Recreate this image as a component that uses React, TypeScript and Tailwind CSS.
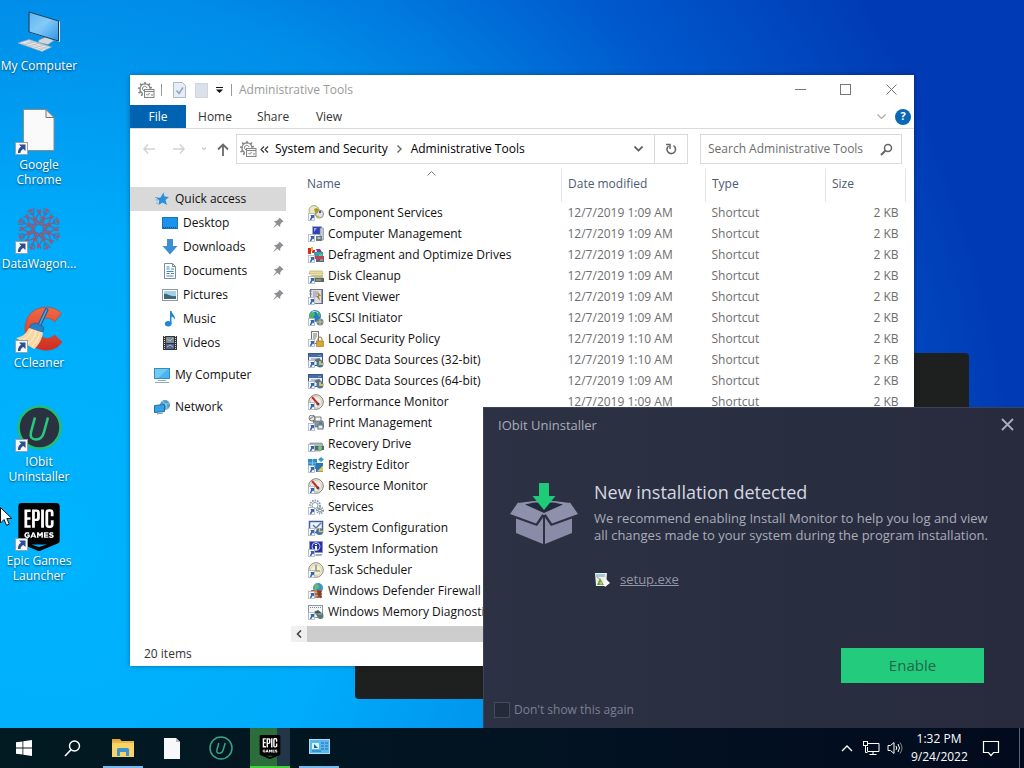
import React from "react";
import { SiEpicgames } from "react-icons/si";

const BLUE = "#2a8fd8";

function ShortcutBadge() {
  return (
    <svg viewBox="0 0 13 13" className="absolute bottom-0 left-[15px] size-[13px]" aria-hidden="true">
      <rect x=".5" y=".5" width="12" height="12" fill="#f7f9fc" stroke="#8fa3b5" />
      <path d="M4 2.500h6.500V9L8.300 7C6.500 8 5.600 9.200 5.400 11H3C2.800 8 4 6 6.100 4.700Z" fill="#2c4f93" />
    </svg>
  );
}

function MonitorLarge() {
  return (
    <svg viewBox="0 0 48 48" className="size-12" aria-hidden="true">
      <defs>
        <linearGradient id="scr" x1="0" y1="0" x2="1" y2="1">
          <stop offset="0" stopColor="#3fa5ee" />
          <stop offset=".5" stopColor="#7cc6f7" />
          <stop offset="1" stopColor="#2d93e4" />
        </linearGradient>
      </defs>
      <path d="M24 32l7-3 8 3.500-6 4-10-2Z" fill="#cfd8df" stroke="#8d9ba7" strokeWidth=".6" />
      <path d="M14 4l31 9.500v20.500L14 24.500Z" fill="#dde6ed" />
      <path d="M14 4l29.500 9v20L14 24Z" fill="url(#scr)" stroke="#1f3a50" strokeWidth="1" />
      <path d="M15 5l22 6.500-18 13L15 23.500Z" fill="#a6daf9" opacity=".3" />
      <path d="M3 35l11-3.500L36.500 39 27 43.500Z" fill="#e8ecef" stroke="#96a3ae" strokeWidth=".7" />
      <path d="M7 35.200l21 6.600M10.500 34l21 6.600M13 32.900l21 6M9 37l10-3.400M14 38.500l10-3.400M19.500 40l10-3.200M24 41.800l9-3.200" stroke="#a7b2bc" strokeWidth=".6" />
    </svg>
  );
}

function PageLarge() {
  return (
    <svg viewBox="0 0 48 48" className="size-12" aria-hidden="true">
      <path d="M8.500 2.500H31l8 8V43.500H8.500Z" fill="#fafafa" stroke="#8b8b8b" />
      <path d="M31 2.500v8h8Z" fill="#eceff1" stroke="#777" />
    </svg>
  );
}

function DataWagon() {
  const spokes = [0, 45, 90, 135, 180, 225, 270, 315];
  return (
    <svg viewBox="0 0 48 48" className="size-12" aria-hidden="true">
      <g fill="none" stroke="#4a74a8" strokeWidth="1.300">
        {spokes.map((a) => (
          <g key={a} transform={`rotate(${a + 22} 24 23)`}>
            <path d="M24 17V1.500M24 13l-6-5M24 13l6-5M20 2.500h8M24 8l-3-4M24 8l3-4M18 8v-4M30 8v-4M18 15l6 4 6-4" />
            <circle cx="24" cy="12" r="1.500" stroke="#bf4a5c" />
            <circle cx="18" cy="7" r="1.100" stroke="#bf4a5c" />
            <circle cx="24" cy="2.500" r=".8" stroke="#bf4a5c" />
            <path d="M22 17l4-2" stroke="#c84458" />
          </g>
        ))}
        <circle cx="24" cy="23" r="5.500" stroke="#a5536a" strokeDasharray="2 1.500" />
      </g>
    </svg>
  );
}

function CCleaner() {
  return (
    <svg viewBox="0 0 48 48" className="size-12" aria-hidden="true">
      <defs>
        <linearGradient id="cc" x1="0" y1="0" x2="0" y2="1">
          <stop offset="0" stopColor="#ef6b45" />
          <stop offset="1" stopColor="#cf2c21" />
        </linearGradient>
      </defs>
      <path d="M46.500 8.500C37-2 15 .5 11 17 6 34 20 47 34 45c6-.7 10-3.500 13-8L39.500 30C34 36 23 34 23.500 23.500 24 13 34 10 39.500 17Z" fill="url(#cc)" stroke="#b8402f" strokeWidth=".6" />
      <path d="M31.500 5L24 21" stroke="#1d5f9e" strokeWidth="4" strokeLinecap="round" />
      <path d="M31.500 5L24 21" stroke="#57a5dc" strokeWidth="1.500" strokeLinecap="round" />
      <path d="M16 19.500l5-1.500 8 4-1 5-14-3Z" fill="#2580c8" stroke="#175b93" strokeWidth=".6" />
      <path d="M14 23l14 4.500C27 34 24 40 19 44L1 33C7 32 11 29 14 23Z" fill="#f6d7a3" />
      <path d="M17 25c-2 5-5 8-9 10M21 26c-1 6-4 10-8 13M25 28c-1 5-4 10-8 13" stroke="#fff0d0" fill="none" />
    </svg>
  );
}

function IObitLarge() {
  return (
    <svg viewBox="0 0 48 48" className="size-12" aria-hidden="true">
      <circle cx="24.500" cy="23.500" r="21" fill="#2a3140" stroke="#22bd74" strokeWidth="2.600" />
      <path d="M20 13.500l-4 14.500c-1.200 5 .8 7.500 5 7.500s6.800-2.700 8-7.500L33 13.500" fill="none" stroke="#2bc77e" strokeWidth="2.600" />
    </svg>
  );
}

function EpicLogo({ size }: { size: "large" | "small" }) {
  return (
    <span className={size === "large" ? "relative grid size-12 place-items-center" : "relative grid size-6 place-items-center"}>
      <span className={size === "large" ? "absolute inset-x-2 top-1 bottom-2 bg-white" : "absolute inset-x-1 top-0.5 bottom-1 bg-white"} />
      <SiEpicgames className={size === "large" ? "relative size-12 text-black" : "relative size-6 text-black"} />
    </span>
  );
}

const desktopIcons: { label: string; icon: React.ReactNode; shortcut?: boolean }[] = [
  { label: "My Computer", icon: <MonitorLarge /> },
  { label: "Google Chrome", icon: <PageLarge />, shortcut: true },
  { label: "DataWagon...", icon: <DataWagon />, shortcut: true },
  { label: "CCleaner", icon: <CCleaner />, shortcut: true },
  { label: "IObit Uninstaller", icon: <IObitLarge />, shortcut: true },
  { label: "Epic Games Launcher", icon: <EpicLogo size="large" />, shortcut: true },
];

function GearTools({ className }: { className: string }) {
  return (
    <svg viewBox="0 0 18 18" className={className} aria-hidden="true" fill="none" stroke="#858585">
      <path d="M8 3.500V1M4.800 4.500L3.200 2.500M3.500 7.500L1 7M4 10.500L1.500 12M5.500 12.500L4.500 15M11.200 4.500L13 2.500M12.500 7L15 6.500" strokeWidth="1.600" />
      <path d="M13 7.500A5 5 0 1 0 6 12.500" strokeWidth="1.200" />
      <path d="M10 7A2.300 2.300 0 1 0 7 9.800" />
      <rect x="7.500" y="8.500" width="9.500" height="8" fill="#f5f5f5" />
      <path d="M7.500 10.500H17M9.500 13l1.200 1.200 2-2.200M14 14h2" />
    </svg>
  );
}

function ListBadge() {
  return (
    <g>
      <rect x=".5" y="8.500" width="6" height="7" fill="#fafcff" stroke="#a9b3bd" strokeWidth=".8" />
      <path d="M2.500 10H6v3.500L4.900 12.500 3.300 15H1.800l1.300-3.200Z" fill="#3762ad" />
    </g>
  );
}

const glyphs: Record<string, React.ReactNode> = {
  component: (
    <g>
      <circle cx="6" cy="5.500" r="5" fill="#eee9bd" stroke="#a4a48c" />
      <circle cx="11.500" cy="9" r="4" fill="#e4e4e4" stroke="#8b8b94" />
      <path d="M6 4l3-1 2 2-2 4-2-2Z" fill="#a59a20" />
      <circle cx="12" cy="7" r="1.200" fill="#554caa" />
      <circle cx="10" cy="12" r="1.500" fill="#d2b838" />
    </g>
  ),
  computer: (
    <g>
      <rect x="4.500" y=".5" width="9" height="8" fill="#3440b8" stroke="#a8adc9" />
      <path d="M6 2h3l-3 4Z" fill="#8fa4ef" />
      <rect x="12" y="2" width="3.500" height="12" fill="#c0c8d3" stroke="#6a7888" strokeWidth=".5" />
      <rect x="8" y="10" width="6" height="5" fill="#69788b" />
      <path d="M9.500 12h3" stroke="#fff" />
    </g>
  ),
  defrag: (
    <g>
      <path d="M0 1h3v6H0ZM4 3h3v3H4Z" fill="#d32e22" />
      <path d="M3 0h2v4H3Z" fill="#ebb925" />
      <path d="M8 2h4l2 3H9Z" fill="#7a3a9e" />
      <rect x="6" y="5" width="9" height="4" fill="#389fa4" />
      <rect x="7" y="9" width="9" height="3" fill="#c83b5a" />
      <rect x="8" y="12" width="8" height="3" fill="#5c6472" />
      <path d="M11 8h3M12 13h3" stroke="#8cf06a" />
    </g>
  ),
  disk: (
    <g>
      <path d="M2 3h12l1 3H1Z" fill="#e8dda0" stroke="#b7a964" strokeWidth=".7" />
      <path d="M3 7h12v3H3Z" fill="#cabf7f" />
      <rect x="6" y="10" width="10" height="4" fill="#5f6668" />
      <path d="M8 12h5" stroke="#9ed07a" />
    </g>
  ),
  event: (
    <g>
      <rect x="2.500" y=".5" width="12" height="14" fill="#dedee8" stroke="#72728a" />
      <path d="M5 3h5M5 5h6M5 7h4M1 2h3M1 5h3" stroke="#8c8ca4" />
      <path d="M10 3l3 4h-2l1 5-4-5h2Z" fill="#a9892b" />
      <path d="M14 1v14" stroke="#555577" />
    </g>
  ),
  iscsi: (
    <g>
      <circle cx="7" cy="6" r="6" fill="#2776c9" />
      <path d="M3 2c4 0 5 2 3 4s2 3 0 5C2 10 1 7 1 5ZM9 1c3 1 4 4 3 6-2 0-3-3-3-6Z" fill="#4eb45f" />
      <path d="M4 2q4-2 6 1" stroke="#b5edef" fill="none" />
      <circle cx="12" cy="12" r="3.500" fill="#67809b" />
      <path d="M12 9v6M9 12h6" stroke="#e0c75b" />
    </g>
  ),
  security: (
    <g>
      <rect x="3.500" y=".5" width="7" height="12" fill="#f4f4f4" stroke="#777" />
      <path d="M5 3h4M5 5h4M5 7h3" stroke="#777" />
      <path d="M10 10V8a2 2 0 0 1 4 0v2" fill="none" stroke="#8d7b35" />
      <rect x="8.500" y="10" width="7" height="5.500" fill="#d8a72c" stroke="#967123" strokeWidth=".6" />
    </g>
  ),
  odbc: (
    <g>
      <rect x=".5" y="1.500" width="14" height="12" fill="#e9edf3" stroke="#3e5682" />
      <rect x="1" y="2" width="13" height="3" fill="#456cab" />
      <path d="M3 7h9M10 3.500h3" stroke="#7a92bc" />
      <path d="M6 8l5-2 4 4-3 3Z" fill="#5f7078" />
      <circle cx="12" cy="12" r="3.500" fill="#4778a7" />
      <path d="M12 9v3h3" stroke="#dbb94c" strokeWidth="2" fill="none" />
    </g>
  ),
  gauge: (
    <g>
      <circle cx="8" cy="8" r="7.300" fill="#f5f0e6" stroke="#817d78" />
      <circle cx="8" cy="8" r="5.500" fill="none" stroke="#c2b8aa" strokeWidth=".7" />
      <path d="M4 3l6 7" stroke="#c42d2d" strokeWidth="2" />
      <circle cx="10" cy="10" r="1.500" fill="#5e3d3d" />
    </g>
  ),
  print: (
    <g>
      <circle cx="4" cy="3" r="3" fill="#e5e5e5" stroke="#777" />
      <path d="M2 4l4-3M7 2h6v5H7Z" stroke="#777" fill="#f5f5f5" />
      <path d="M5 6h10l1 6H7Z" fill="#8b969c" stroke="#53616a" strokeWidth=".6" />
      <rect x="10" y="10" width="5" height="4" fill="#e4ecef" stroke="#607179" />
      <path d="M11 8h3" stroke="#315f86" />
    </g>
  ),
  recovery: (
    <g>
      <path d="M2 7h12l2 6-4 2H2Z" fill="#abb8bd" stroke="#79888f" strokeWidth=".7" />
      <rect x="7" y="10" width="9" height="4" fill="#506b72" />
      <circle cx="12" cy="12" r="2" fill="#7ed067" />
    </g>
  ),
  registry: (
    <g>
      <rect x="0" y="2" width="9" height="10" fill="#2e8fc8" />
      <path d="M0 6h9M4.500 2v10" stroke="#8fd0ee" strokeWidth=".8" />
      <path d="M13 0l3 2.500-3 2.500-3-2.500Z" fill="#339bd5" />
      <rect x="8" y="6" width="7" height="9" fill="#2b76ae" />
      <path d="M9 14.500l6-6v6Z" fill="#e0cb50" />
    </g>
  ),
  services: (
    <g fill="none" stroke="#899ca8">
      <circle cx="7" cy="6.500" r="5" strokeWidth="2" strokeDasharray="1.500 1" />
      <circle cx="7" cy="6.500" r="3" />
      <circle cx="12" cy="11.500" r="3" strokeWidth="2" strokeDasharray="1.200 1" />
      <circle cx="12" cy="11.500" r="1.500" stroke="#74818a" />
    </g>
  ),
  config: (
    <g>
      <rect x="1.500" y="1.500" width="13" height="11" fill="#edf6ff" stroke="#4360a5" strokeWidth="1.500" />
      <path d="M5 5l3 3 5-5" stroke="#5c78a5" fill="none" strokeWidth="1.500" />
      <circle cx="11.500" cy="11.500" r="3.500" fill="#3f74aa" />
      <path d="M11.500 8v3.500H15" stroke="#e6c250" strokeWidth="1.500" fill="none" />
    </g>
  ),
  info: (
    <g>
      <rect x="1.500" y=".5" width="13" height="11" fill="#2630a0" stroke="#9098bd" />
      <circle cx="8" cy="5.500" r="4" fill="none" stroke="#c3c9ff" />
      <path d="M8 3v1M8 5v4" stroke="#fff" strokeWidth="2" />
      <path d="M8 13h7l-2 2H7Z" fill="#a8acb8" />
    </g>
  ),
  clock: (
    <g>
      <circle cx="8" cy="8" r="7.300" fill="#f4f1d3" stroke="#8a8c86" />
      <circle cx="8" cy="8" r="5.500" fill="none" stroke="#c5c0a3" strokeWidth=".7" />
      <path d="M8 3v6h4" stroke="#797566" fill="none" strokeWidth="1.200" />
    </g>
  ),
  firewall: (
    <g>
      <circle cx="10" cy="5" r="5" fill="#3e94c6" />
      <path d="M7 1c4 0 5 3 3 4s-2 3-4 2Z" fill="#68bd6e" />
      <path d="M3 7h11v8H3Z" fill="#bd5e3f" />
      <path d="M3 9.500h11M3 12.500h11M8 7v3M11 10v3M8 13v2" stroke="#edb997" strokeWidth=".7" />
      <path d="M9 7l4 1v7l-3-2Z" fill="#6b4932" />
    </g>
  ),
  memory: (
    <g>
      <rect x=".5" y="1.500" width="14" height="12" fill="#f4f4f4" stroke="#8b989f" />
      <path d="M2 3.500h11" stroke="#77868e" strokeDasharray="1 1" />
      <path d="M6 8l4-2 5 4-5 3Z" fill="#45545a" />
      <circle cx="12.500" cy="12" r="3" fill="#5a7479" />
      <path d="M5 10h9" stroke="#a2bca2" />
    </g>
  ),
};

const files: { name: string; glyph: string; time?: string }[] = [
  { name: "Component Services", glyph: "component", time: "1:09 AM" },
  { name: "Computer Management", glyph: "computer", time: "1:09 AM" },
  { name: "Defragment and Optimize Drives", glyph: "defrag", time: "1:09 AM" },
  { name: "Disk Cleanup", glyph: "disk", time: "1:09 AM" },
  { name: "Event Viewer", glyph: "event", time: "1:09 AM" },
  { name: "iSCSI Initiator", glyph: "iscsi", time: "1:09 AM" },
  { name: "Local Security Policy", glyph: "security", time: "1:10 AM" },
  { name: "ODBC Data Sources (32-bit)", glyph: "odbc", time: "1:10 AM" },
  { name: "ODBC Data Sources (64-bit)", glyph: "odbc", time: "1:09 AM" },
  { name: "Performance Monitor", glyph: "gauge", time: "1:09 AM" },
  { name: "Print Management", glyph: "print" },
  { name: "Recovery Drive", glyph: "recovery" },
  { name: "Registry Editor", glyph: "registry" },
  { name: "Resource Monitor", glyph: "gauge" },
  { name: "Services", glyph: "services" },
  { name: "System Configuration", glyph: "config" },
  { name: "System Information", glyph: "info" },
  { name: "Task Scheduler", glyph: "clock" },
  { name: "Windows Defender Firewall w", glyph: "firewall" },
  { name: "Windows Memory Diagnostic", glyph: "memory" },
];

const navGlyphs: Record<string, React.ReactNode> = {
  star: (
    <g>
      <path d="M9.500 1.500l1 4 4.500.5-3.500 3 1.500 5-4.500-2.500L4.500 14l.7-4.500L2.500 7l4-.5Z" fill={BLUE} />
      <path d="M1 6.500h3M1.500 9h2.500M2 12h2" stroke="#63b4e6" />
    </g>
  ),
  desktop: (
    <g>
      <rect x=".5" y="2.500" width="15" height="11" fill="#1a93ed" stroke="#1875b8" />
      <path d="M1 12.500h14" stroke="#134c78" strokeDasharray="1 1" />
    </g>
  ),
  downloads: <path d="M5 0h6v7h4.500L8 15.500.5 7H5Z" fill="#3c8fd3" />,
  documents: (
    <g>
      <path d="M2.500.5h8l3 3v12h-11Z" fill="#fff" stroke="#7e8b96" />
      <path d="M10.500.5v3h3" fill="none" stroke="#7e8b96" />
      <path d="M4.500 4h3M4.500 6h3M9 6h3M4.500 8.500h7M4.500 10.500h3M9 10.500h3M4.500 13h7" stroke="#3f8bc7" />
    </g>
  ),
  pictures: (
    <g>
      <rect x=".5" y="2.500" width="15" height="11" fill="#fff" stroke="#8e979e" />
      <rect x="2" y="4" width="12" height="8" fill="#a6d0ea" />
      <path d="M2 7c3-1 6 3 12 2v3H2Z" fill="#3d6878" />
    </g>
  ),
  music: (
    <g>
      <path d="M8 0h1.500c.3 3 4 4 3.500 9-.8-2-2-3-3.500-3.300V13H8Z" fill="#1f88d6" />
      <ellipse cx="6.200" cy="12.700" rx="3.300" ry="2.700" fill="#1f88d6" />
    </g>
  ),
  videos: (
    <g>
      <rect x="1" y="1" width="14" height="14" fill="#333" />
      <path d="M2.500 1v14M13.500 1v14" stroke="#ddd" strokeDasharray="1 1" />
      <rect x="4" y="2" width="8" height="6" fill="#7689a5" />
      <rect x="4" y="9" width="8" height="5" fill="#4c63a7" />
      <path d="M5 4l3 2 3-3M5 12l3-2 3 2" stroke="#c3c65d" fill="none" />
    </g>
  ),
  pc: (
    <g>
      <rect x=".5" y="1.500" width="15" height="10" fill="#46b7f0" stroke="#3a89b8" />
      <path d="M1 2h13L4 11H1Z" fill="#8bd8fa" opacity=".6" />
      <path d="M4 13.500h8M1 15.500h14" stroke="#8fa9ba" />
    </g>
  ),
  network: (
    <g>
      <circle cx="11" cy="6" r="5" fill="#4f9fca" />
      <path d="M8 2c3 2 5 4 5 8M7 6c4 0 6-1 8-2" stroke="#9fd0e8" fill="none" />
      <path d="M.5 6.500l10-1v7l-10 1Z" fill="#33a3e6" stroke="#256c9c" />
      <path d="M3 15l6-1" stroke="#7794a6" />
    </g>
  ),
};

const quickItems: { label: string; glyph: string; pinned: boolean }[] = [
  { label: "Desktop", glyph: "desktop", pinned: true },
  { label: "Downloads", glyph: "downloads", pinned: true },
  { label: "Documents", glyph: "documents", pinned: true },
  { label: "Pictures", glyph: "pictures", pinned: true },
  { label: "Music", glyph: "music", pinned: false },
  { label: "Videos", glyph: "videos", pinned: false },
];

function Icon16({ children }: { children: React.ReactNode }) {
  return (
    <svg viewBox="0 0 16 16" className="size-4 shrink-0" aria-hidden="true">
      {children}
    </svg>
  );
}

function Pin() {
  return (
    <svg viewBox="0 0 12 12" className="ml-auto size-3" aria-hidden="true">
      <path d="M7.500.5L11.500 4.500 10 5.200 8.300 7.200 8.200 10 5.300 7.700.8 11.500 4.300 6.800 2 4 4.800 3.800 6.800 2Z" fill="#8b8f94" />
    </svg>
  );
}

function Explorer() {
  return (
    <section className="absolute top-[75px] right-[110px] left-[130px] flex flex-col bg-white shadow-[0_0_5px_rgba(0,0,0,0.35)]">
      <header className="flex h-[30px] items-center">
        <GearTools className="ml-[7px] size-[18px]" />
        <span className="ml-1.5 h-3 w-px bg-[#999]" />
        <svg viewBox="0 0 13 16" className="ml-[11px] h-4 w-[13px]" aria-hidden="true">
          <path d="M.5.500h9l3 3v12H.5Z" fill="#e6edf6" stroke="#b2b8c0" />
          <path d="M3.500 8.500l2.500 3 4-6" fill="none" stroke="#8da4c8" strokeWidth="1.500" />
        </svg>
        <span className="ml-[9px] h-[15px] w-[13px] border border-[#d0d5de] bg-[#dbe1ea]" />
        <svg viewBox="0 0 7 6" className="ml-2 h-1.5 w-[7px]" aria-hidden="true">
          <path d="M0 .5h7" stroke="#111" />
          <path d="M0 2.500h7L3.500 6Z" fill="#111" />
        </svg>
        <span className="ml-2 h-3 w-px bg-[#999]" />
        <h1 className="ml-[7px] text-xs text-[#999]">Administrative Tools</h1>
        <div className="ml-auto flex h-full pb-0.5 text-[#777]">
          <button aria-label="Minimize" className="grid w-[45px] place-items-center">
            <svg viewBox="0 0 11 11" className="size-[11px]"><path d="M0 5.500h11" stroke="currentColor" /></svg>
          </button>
          <button aria-label="Maximize" className="grid w-[45px] place-items-center">
            <svg viewBox="0 0 11 11" className="size-[11px]"><rect x=".5" y=".5" width="10" height="10" fill="none" stroke="currentColor" /></svg>
          </button>
          <button aria-label="Close" className="grid w-[46px] place-items-center">
            <svg viewBox="0 0 11 11" className="size-[11px]"><path d="M.5.500l10 10M10.500.500l-10 10" stroke="currentColor" /></svg>
          </button>
        </div>
      </header>

      <div className="flex h-6 items-stretch border-b border-[#dadbdc] text-xs text-[#333]">
        <button className="w-14 bg-[#0063b1] text-white">File</button>
        <button className="w-[58px]">Home</button>
        <button className="w-[58px]">Share</button>
        <button className="w-[54px]">View</button>
        <button aria-label="Expand ribbon" className="ml-auto grid w-6 place-items-center">
          <svg viewBox="0 0 9 6" className="h-1.5 w-[9px]"><path d="M.5.500l4 4 4-4" fill="none" stroke="#aaa" strokeWidth="1.200" /></svg>
        </button>
        <button aria-label="Help" className="mr-[3px] ml-0.5 grid size-4 place-items-center self-center rounded-full bg-[#0b68b5] text-[11px] font-bold text-white">?</button>
      </div>

      <div className="flex h-10 items-center pr-3">
        <button aria-label="Back" className="ml-[13px]">
          <svg viewBox="0 0 12 12" className="size-3"><path d="M12 6H1M5 1.500L1 6l4 4.500" fill="none" stroke="#d2d2d2" strokeWidth="1.500" /></svg>
        </button>
        <button aria-label="Forward" className="ml-[18px]">
          <svg viewBox="0 0 12 12" className="size-3"><path d="M0 6h11M7 1.500L11 6l-4 4.500" fill="none" stroke="#d2d2d2" strokeWidth="1.500" /></svg>
        </button>
        <button aria-label="Recent locations" className="ml-4">
          <svg viewBox="0 0 6 4" className="h-1 w-1.5"><path d="M1 .5L3 2.500 5 .5" fill="none" stroke="#ccc" strokeWidth="1.200" /></svg>
        </button>
        <button aria-label="Up" className="ml-2.5">
          <svg viewBox="0 0 12 13" className="h-[13px] w-3"><path d="M6 13V1.500M1 6.500l5-5 5 5" fill="none" stroke="#6b6b6b" strokeWidth="1.800" /></svg>
        </button>
        <div className="ml-[7px] flex h-[30px] flex-1 items-center border border-[#d9d9d9] text-xs text-black">
          <GearTools className="ml-0.5 size-[18px]" />
          <svg viewBox="0 0 9 7" className="ml-[3px] h-[7px] w-[9px]" aria-hidden="true"><path d="M4 .5l-3 3 3 3M8 .5l-3 3 3 3" fill="none" stroke="#333" strokeWidth="1.200" /></svg>
          <a href="#system" className="ml-1.5 whitespace-nowrap">System and Security</a>
          <svg viewBox="0 0 5 8" className="mx-[9px] h-2 w-[5px]" aria-hidden="true"><path d="M.5.500L4 4 .5 7.500" fill="none" stroke="#666" strokeWidth="1.400" /></svg>
          <a href="#admin" className="whitespace-nowrap">Administrative Tools</a>
          <button aria-label="Previous locations" className="ml-auto grid h-full w-8 place-items-center">
            <svg viewBox="0 0 9 6" className="h-1.5 w-[9px]"><path d="M.5.500l4 4 4-4" fill="none" stroke="#555" strokeWidth="1.600" /></svg>
          </button>
          <button aria-label="Refresh" className="grid h-full w-[33px] place-items-center border-l border-[#d9d9d9]">
            <svg viewBox="0 0 12 12" className="size-3"><path d="M8.500 2.600A4.300 4.300 0 1 1 3.500 3" fill="none" stroke="#666" strokeWidth="1.600" /><path d="M1 1.500H5V6" fill="none" stroke="#666" strokeWidth="1.500" /></svg>
          </button>
        </div>
        <label className="ml-3 flex h-[30px] w-[202px] items-center border border-[#d9d9d9] pr-2 pl-[7px]">
          <input aria-label="Search Administrative Tools" placeholder="Search Administrative Tools" className="min-w-0 flex-1 text-xs placeholder:text-[#6d6d6d] outline-none" />
          <svg viewBox="0 0 13 13" className="size-[13px]" aria-hidden="true"><circle cx="8" cy="5" r="3.500" fill="none" stroke="#666" strokeWidth="1.500" /><path d="M5.300 7.700L1 12" stroke="#666" strokeWidth="2" /></svg>
        </label>
      </div>

      <div className="flex">
        <nav className="w-[156px] shrink-0 pt-[18px] text-xs text-[#111]">
          <a href="#quick" className="flex h-6 items-center gap-[5px] bg-[#d9d9d9] pl-6"><Icon16>{navGlyphs.star}</Icon16>Quick access</a>
          {quickItems.map((item) => (
            <a key={item.label} href={"#" + item.label} className="flex h-6 items-center gap-[5px] pr-0.5 pl-8">
              <Icon16>{navGlyphs[item.glyph]}</Icon16>
              {item.label}
              {item.pinned && <Pin />}
            </a>
          ))}
          <a href="#pc" className="mt-2 flex h-6 items-center gap-[5px] pl-6"><Icon16>{navGlyphs.pc}</Icon16>My Computer</a>
          <a href="#network" className="mt-2 flex h-6 items-center gap-[5px] pl-6"><Icon16>{navGlyphs.network}</Icon16>Network</a>
        </nav>

        <div className="min-w-0 flex-1 pl-[5px]">
          <div className="pr-2 pl-2.5">
            <table className="w-full table-fixed border-collapse text-xs">
              <thead>
                <tr className="h-[33px] text-left text-[#4c5a70] [&>th]:border-r [&>th]:border-[#e5e5e5] [&>th]:pb-1 [&>th]:pl-1.5 [&>th]:font-normal">
                  <th className="relative">
                    Name
                    <svg viewBox="0 0 9 5" className="absolute top-[2px] left-[126px] h-[5px] w-[9px]" aria-hidden="true"><path d="M.5 4.500l4-4 4 4" fill="none" stroke="#777" /></svg>
                  </th>
                  <th className="w-36">Date modified</th>
                  <th className="w-[120px]">Type</th>
                  <th className="w-20">Size</th>
                </tr>
              </thead>
              <tbody>
                {files.map((f) => (
                  <tr key={f.name} className="h-[21px] whitespace-nowrap text-[#6d6d6d]">
                    <td className="p-0 pl-[7px]">
                      <span className="flex items-center gap-1 text-[#111]">
                        <Icon16>{glyphs[f.glyph]}<ListBadge /></Icon16>
                        {f.name}
                      </span>
                    </td>
                    <td className="p-0 pl-1.5">{f.time && "12/7/2019 " + f.time}</td>
                    <td className="p-0 pl-1.5">{f.time && "Shortcut"}</td>
                    <td className="p-0 pr-[7px] text-right">{f.time && "2 KB"}</td>
                  </tr>
                ))}
              </tbody>
            </table>
          </div>
          <div className="mt-1 flex h-4 bg-[#f0f0f0]">
            <button aria-label="Scroll left" className="grid w-4 place-items-center">
              <svg viewBox="0 0 6 8" className="h-2 w-1.5"><path d="M5 .5L1.500 4 5 7.500" fill="none" stroke="#444" strokeWidth="1.600" /></svg>
            </button>
            <div className="mr-20 flex-1 bg-[#cdcdcd]" />
          </div>
        </div>
      </div>
      <footer className="flex h-6 items-center pl-3.5 text-xs text-[#333]">20 items</footer>
    </section>
  );
}

function Box() {
  return (
    <svg viewBox="0 0 68 62" className="mt-px h-[62px] w-[68px] shrink-0" aria-hidden="true">
      <path d="M8 20L24 18H44L60 20 34 32Z" fill="#8f91ac" />
      <path d="M15 21.500L24 19.500H44L53 21.500 34 30Z" fill="#232a3a" />
      <path d="M8 19.500L33 30 26 40.500 0 31Z" fill="#8f91ac" />
      <path d="M60 19.500L35 30 42 40.500 68 31Z" fill="#8f91ac" />
      <path d="M6 35.500l21 7.500 6-8.500V61L6 50Z" fill="#898ba7" />
      <path d="M62 35.500l-21 7.500-6-8.500V61L62 50Z" fill="#898ba7" />
      <path d="M29 0h10v13h6.500L34 27 22.500 13H29Z" fill="#1fcb78" />
    </svg>
  );
}

function InstallDialog() {
  return (
    <section className="absolute right-0 bottom-0 flex w-[541px] flex-col border-t border-l border-[#3d4357] bg-[#2a2f42] bg-linear-to-r from-[#2c3144] to-[#272b3d]">
      <header className="flex h-9 items-center justify-between pr-2.5 pl-3.5">
        <h2 className="text-[13px] text-[#a9adba]">IObit Uninstaller</h2>
        <button aria-label="Close" className="mb-1 text-[#a9adc0]">
          <svg viewBox="0 0 13 13" className="size-[13px]"><path d="M1 1l11 11M12 1L1 12" stroke="currentColor" strokeWidth="1.800" /></svg>
        </button>
      </header>
      <div className="flex pt-[38px] pl-[26px]">
        <Box />
        <div className="ml-4">
          <h3 className="text-lg leading-5 text-[#d5d8e0]">New installation detected</h3>
          <p className="mt-2 text-[13px] leading-[17px] whitespace-nowrap text-[#a9adba]">
            We recommend enabling Install Monitor to help you log and view<br />
            all changes made to your system during the program installation.
          </p>
          <div className="mt-[26px] flex h-5 items-center gap-2.5">
            <Icon16>
              <path d="M1 1h12l-1 13H2Z" fill="#e6f1ec" />
              <path d="M2 2h9v3H2Z" fill="#a6cbd8" />
              <path d="M3 13l3-7 4 7Z" fill="#5c9d51" />
              <path d="M3 5l4 3M9 9h3" stroke="#d48a4e" />
              <path d="M10 5l6 6-5 4-2-4Z" fill="#f7f7f7" />
              <circle cx="7" cy="11" r="1.500" fill="#c7c54b" />
            </Icon16>
            <a href="#setup" className="text-[13px] text-[#9296a6] underline">setup.exe</a>
          </div>
        </div>
      </div>
      <div className="mt-[58px] flex justify-end pr-10">
        <button className="h-[35px] w-[143px] bg-[#22cc7c] text-[15px] text-[#226548]">Enable</button>
      </div>
      <label className="mt-[17px] mb-2 flex h-5 items-center gap-1 pl-2.5 text-xs text-[#7b8092]">
        <input type="checkbox" className="size-4 appearance-none border border-[#454a5d] bg-[#25293a]" />
        Don't show this again
      </label>
    </section>
  );
}

function Taskbar() {
  return (
    <footer className="flex h-10 shrink-0 items-stretch bg-linear-to-r from-[#021a22] via-[#021322] to-[#020b1e] text-white">
      <button aria-label="Start" className="grid w-12 place-items-center">
        <svg viewBox="0 0 16 16" className="size-4" fill="#fff"><path d="M0 2.300L6.500 1.400V7.600H0ZM7.300 1.300L16 0V7.600H7.300ZM0 8.400H6.500V14.600L0 13.700ZM7.300 8.400H16V16L7.300 14.700Z" /></svg>
      </button>
      <button aria-label="Search" className="grid w-12 place-items-center">
        <svg viewBox="0 0 17 17" className="size-[17px]" fill="none" stroke="#fff"><circle cx="10.500" cy="6" r="5" strokeWidth="1.400" /><path d="M7 9.700L1 16" strokeWidth="1.600" /></svg>
      </button>
      <div className="ml-[7px] flex gap-[9px]">
        <button aria-label="File Explorer" className="grid w-10 place-items-center border-b-2 border-[#76b9ed] pt-0.5">
          <svg viewBox="0 0 22 20" className="h-5 w-[22px]"><path d="M0 1h8l1.500 2H0Z" fill="#dfa735" /><path d="M0 3h22v16H0Z" fill="#f8d468" /><path d="M0 3h22v2H0Z" fill="#e9b64b" /><path d="M5 18V11.500Q5 10 6.500 10h9Q17 10 17 11.500V18h-3v-4H8v4Z" fill="#3e94cb" /></svg>
        </button>
        <button aria-label="Google Chrome" className="grid w-10 place-items-center">
          <svg viewBox="0 0 16 21" className="h-[21px] w-4"><path d="M0 0h12l4 4v17H0Z" fill="#f7f8f9" /><path d="M12 0v4h4Z" fill="#b5bcc3" /></svg>
        </button>
        <button aria-label="IObit Uninstaller" className="grid w-10 place-items-center">
          <svg viewBox="0 0 24 24" className="size-6" fill="none" stroke="#32a682"><circle cx="12" cy="12" r="11" strokeWidth="1.500" /><path d="M9.800 7L8 13.500c-.6 2.500.2 3.700 2.300 3.700s3.400-1.200 4-3.700L16.200 7" strokeWidth="1.500" /></svg>
        </button>
        <button aria-label="Epic Games Launcher" className="grid w-10 place-items-center border-b-2 border-[#3fd03c] bg-linear-to-r from-[#2c6d3c] from-67% to-[#223647] to-67%"><EpicLogo size="small" /></button>
        <button aria-label="Administrative Tools" className="grid w-10 place-items-center border-b-2 border-[#76b9ed]">
          <svg viewBox="0 0 21 16" className="h-4 w-[21px]"><rect x=".5" y=".5" width="20" height="14" fill="#58b7ed" stroke="#a6dcf6" /><path d="M3 4h7v6H3Z" fill="#d8f2ff" /><path d="M5 5v4h4Z" fill="#23648f" /><path d="M12 4h3M16 4h3M12 7h3M16 7h3M12 10h3M16 10h3M3 12h9" stroke="#2071aa" /></svg>
        </button>
      </div>
      <div className="ml-auto flex items-center">
        <svg viewBox="0 0 12 7" className="h-[7px] w-3" fill="none" stroke="#fff" aria-hidden="true"><path d="M1 6l5-5 5 5" strokeWidth="1.400" /></svg>
        <svg viewBox="0 0 17 14" className="ml-2.5 h-3.5 w-[17px]" fill="none" stroke="#fff" aria-hidden="true"><path d="M5 2.500H16v8H4.500V6M10 10.500V13M6.500 13.500h7" /><rect x=".5" y=".5" width="4" height="4" /><path d="M2.500 4.500v7h2" /></svg>
        <svg viewBox="0 0 17 14" className="ml-[7px] h-3.5 w-[17px]" fill="none" stroke="#fff" aria-hidden="true"><path d="M1 4.500h2.500L7 1.500v11L3.500 9.500H1Z" /><path d="M9 5q1.500 2 0 4M11 3q3 4 0 8" /><path d="M13 1.500q4 5.500 0 11" stroke="#888" /></svg>
        <time className="ml-[7px] w-14 text-center text-xs leading-[18px]">1:32 PM<br />9/24/2022</time>
        <button aria-label="Notifications" className="ml-[15px]">
          <svg viewBox="0 0 18 18" className="size-[18px]" fill="none" stroke="#fff"><path d="M1.500 2.500h15v11h-5l-2.500 3-2.500-3h-5Z" strokeWidth="1.200" /></svg>
        </button>
        <span className="mr-1 ml-[19px] h-full w-px bg-[#596474]" />
      </div>
    </footer>
  );
}

export default function App() {
  return (
    <div className="flex min-h-screen flex-col overflow-hidden font-['Open_Sans','Noto_Sans',sans-serif]">
      <main className="relative flex-1 bg-[radial-gradient(ellipse_95%_140%_at_5%_75%,#00b4ff_0%,#00acfb_30%,#008ce8_55%,#0058cc_78%,#003ab4_100%)]">
        <ul className="flex w-[78px] flex-col pt-2">
          {desktopIcons.map((item) => (
            <li key={item.label} className="h-[99px]">
              <button className="flex w-full flex-col items-center text-xs leading-[15px] text-white [text-shadow:0_1px_2px_rgba(0,0,0,0.6)]">
                <span className="relative mb-0.5 flex w-full justify-center">
                  {item.icon}
                  {item.shortcut && <ShortcutBadge />}
                </span>
                {item.label}
              </button>
            </li>
          ))}
        </ul>
        <div className="absolute top-[353px] right-[55px] bottom-[29px] left-[355px] rounded bg-[#1e2020]" />
        <Explorer />
        <InstallDialog />
        <svg viewBox="0 0 12 19" className="absolute top-[507px] left-0 h-[19px] w-3" aria-hidden="true">
          <path d="M.5.500v15.500L4 12.500l2.500 5.800 2.800-1.200L6.800 11.500h5Z" fill="#fff" stroke="#111" />
        </svg>
      </main>
      <Taskbar />
    </div>
  );
}
